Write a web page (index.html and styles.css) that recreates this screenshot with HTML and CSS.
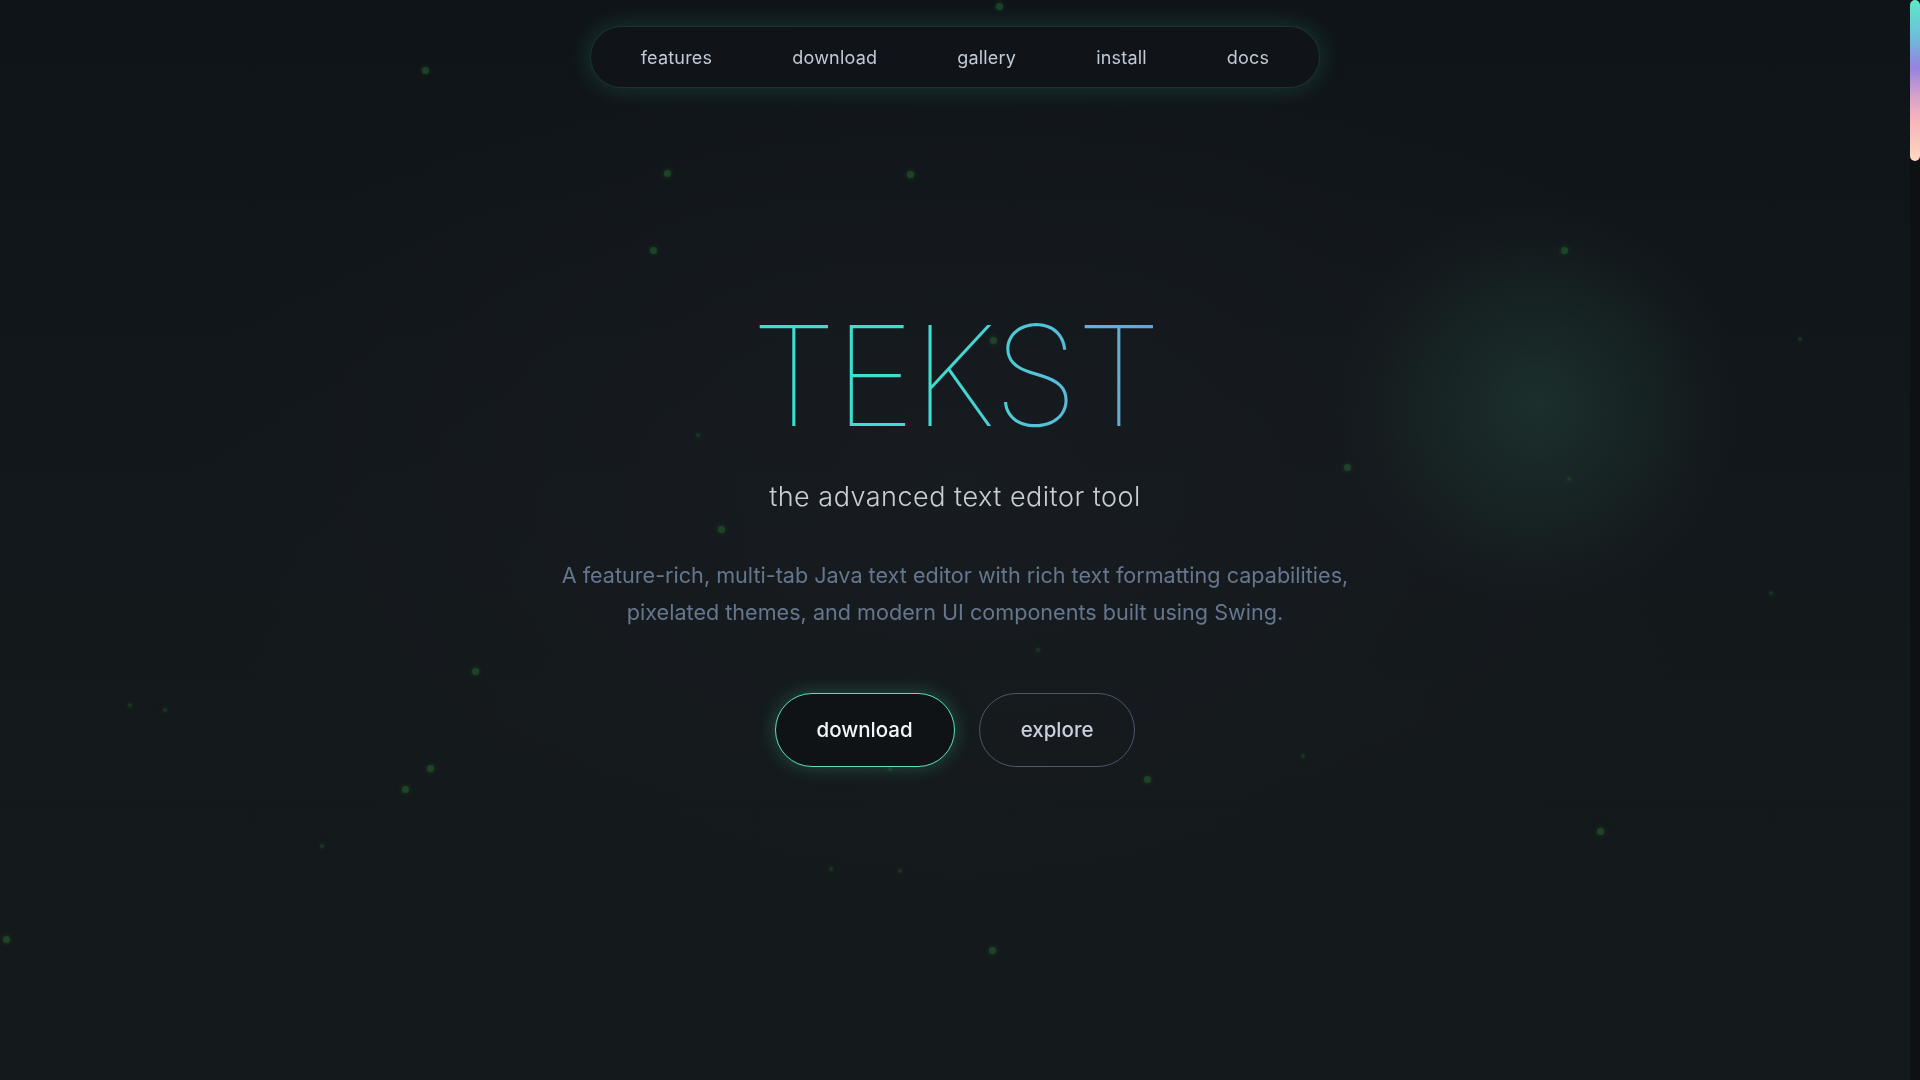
FILE: index.html
```html
<!DOCTYPE html>
<html lang="en">
<head>
<meta charset="utf-8">
<title>Tekst — the advanced text editor tool</title>
<link rel="stylesheet" href="styles.css">
</head>
<body>
<div class="backdrop" aria-hidden="true">
  <div class="glow"></div>
  <span class="dot" style="left:425px;top:70px"></span>
  <span class="dot" style="left:999px;top:6px"></span>
  <span class="dot" style="left:667px;top:173px"></span>
  <span class="dot" style="left:910px;top:174px"></span>
  <span class="dot" style="left:653px;top:250px"></span>
  <span class="dot" style="left:1564px;top:250px"></span>
  <span class="dot sm" style="left:1800px;top:339px"></span>
  <span class="dot" style="left:993px;top:340px"></span>
  <span class="dot sm" style="left:698px;top:435px"></span>
  <span class="dot" style="left:1347px;top:467px"></span>
  <span class="dot sm" style="left:1569px;top:479px"></span>
  <span class="dot" style="left:721px;top:529px"></span>
  <span class="dot sm" style="left:1771px;top:593px"></span>
  <span class="dot" style="left:475px;top:671px"></span>
  <span class="dot sm" style="left:1038px;top:650px"></span>
  <span class="dot sm" style="left:130px;top:705px"></span>
  <span class="dot sm" style="left:165px;top:710px"></span>
  <span class="dot" style="left:430px;top:768px"></span>
  <span class="dot" style="left:405px;top:789px"></span>
  <span class="dot" style="left:1147px;top:779px"></span>
  <span class="dot sm" style="left:1303px;top:756px"></span>
  <span class="dot" style="left:1600px;top:831px"></span>
  <span class="dot sm" style="left:322px;top:846px"></span>
  <span class="dot sm" style="left:831px;top:869px"></span>
  <span class="dot sm" style="left:900px;top:871px"></span>
  <span class="dot" style="left:6px;top:939px"></span>
  <span class="dot" style="left:992px;top:950px"></span>
  <span class="dot sm" style="left:890px;top:769px"></span>
</div>

<div class="scrollbar" aria-hidden="true"><div class="scroll-thumb"></div></div>

<header class="top">
  <nav class="nav">
    <a href="#features" class="nav-link">features</a>
    <a href="#download" class="nav-link">download</a>
    <a href="#gallery" class="nav-link">gallery</a>
    <a href="#install" class="nav-link">install</a>
    <a href="#docs" class="nav-link">docs</a>
  </nav>
</header>

<main>
  <section class="hero">
    <h1 class="title">TEKST</h1>
    <p class="subtitle">the advanced text editor tool</p>
    <p class="desc">A feature-rich, multi-tab Java text editor with rich text formatting capabilities, pixelated themes, and modern UI components built using Swing.</p>
    <div class="actions">
      <a href="#download" class="btn btn-primary">download</a>
      <a href="#features" class="btn btn-ghost">explore</a>
    </div>
  </section>
</main>
</body>
</html>
```
FILE: styles.css
```css
html {
  background: #12171a;
  scrollbar-width: none;
}
html::-webkit-scrollbar {
  display: none;
}
body {
  margin: 0;
  padding-right: 10px;
  font-family: Inter, "Noto Sans", "Liberation Sans", sans-serif;
  color: #c8ced6;
  background: transparent;
}

.scrollbar {
  position: fixed;
  top: 0;
  right: 0;
  width: 10px;
  height: 100vh;
  background: #0e1013;
  z-index: 10;
}
.scroll-thumb {
  height: 161px;
  border-radius: 5px;
  background: linear-gradient(180deg, #5ee8c8 0%, #6cc0da 22%, #9682e0 42%, #d8a2cc 60%, #f8b2bc 74%, #ffd8c0 100%);
}

.backdrop {
  position: fixed;
  inset: 0;
  z-index: -1;
  pointer-events: none;
  background:
    radial-gradient(ellipse 1100px 700px at 50% 45%, rgba(26, 30, 34, 0.6), transparent 70%),
    linear-gradient(180deg, #0f1418 0%, #13181c 50%, #141a1b 100%);
}
.glow {
  position: absolute;
  left: 1337px;
  top: 204px;
  width: 400px;
  height: 400px;
  border-radius: 50%;
  background: radial-gradient(circle, rgba(36, 70, 60, 0.5) 0%, rgba(32, 60, 52, 0.32) 35%, rgba(28, 50, 45, 0.1) 60%, transparent 72%);
}
.dot {
  position: absolute;
  width: 7px;
  height: 7px;
  margin: -3px 0 0 -3px;
  border-radius: 50%;
  background: #23552b;
  box-shadow: 0 0 4px 1px rgba(34, 84, 42, 0.55);
  opacity: 0.7;
}
.dot.sm {
  width: 4px;
  height: 4px;
  margin: -2px 0 0 -2px;
  opacity: 0.45;
}

.top {
  display: flex;
  justify-content: center;
  padding-top: 26px;
}
.nav {
  display: flex;
  align-items: center;
  gap: 80px;
  height: 62px;
  box-sizing: border-box;
  padding: 0 50px;
  border-radius: 31px;
  background: #101419;
  border: 1px solid rgba(70, 130, 120, 0.25);
  box-shadow: 0 0 22px 2px rgba(50, 170, 145, 0.22);
}
.nav-link {
  color: #c2cad4;
  text-decoration: none;
  font-size: 18px;
  letter-spacing: 0.2px;
}

.hero {
  display: flex;
  flex-direction: column;
  align-items: center;
  text-align: center;
  padding-top: 218px;
  height: calc(100vh - 88px);
  box-sizing: border-box;
}
.title {
  margin: 0;
  font-size: 139px;
  line-height: 1;
  font-weight: 100;
  letter-spacing: -2.5px;
  background: linear-gradient(90deg, #3de0cf 0%, #3fdcd0 45%, #52c4d8 70%, #6aa2d2 100%);
  -webkit-background-clip: text;
  background-clip: text;
  color: transparent;
}
.subtitle {
  margin: 36px 0 0;
  font-size: 27px;
  line-height: 1.2;
  font-weight: 300;
  letter-spacing: 0.5px;
  color: #c9cfd7;
}
.desc {
  margin: 44px 0 0;
  max-width: 820px;
  font-size: 21.6px;
  line-height: 1.7;
  font-weight: 400;
  color: #66768c;
}
.actions {
  display: flex;
  gap: 24px;
  margin-top: 62px;
}
.btn {
  display: inline-flex;
  align-items: center;
  justify-content: center;
  height: 74px;
  box-sizing: border-box;
  padding: 0 41px;
  border-radius: 37px;
  font-size: 20.5px;
  font-weight: 500;
  text-decoration: none;
}
.btn-primary {
  background: #0f1316;
  color: #f2f5f7;
  border: 1.5px solid #5fe0b4;
  box-shadow: 0 0 18px rgba(70, 220, 170, 0.28);
}
.btn-ghost {
  background: transparent;
  color: #c9d0da;
  border: 1.5px solid #4c5668;
}
```
